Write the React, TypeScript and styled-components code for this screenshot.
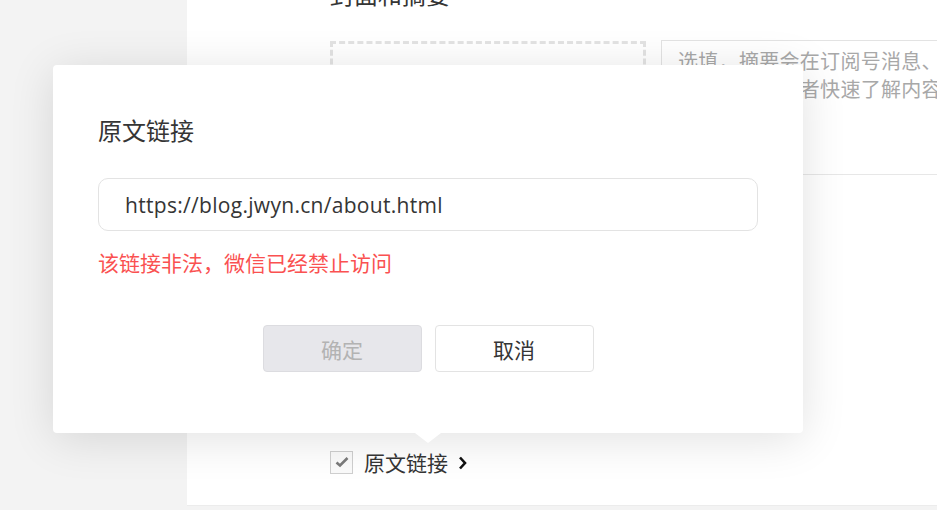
import React from "react";
import styled, { createGlobalStyle } from "styled-components";

const GlobalStyle = createGlobalStyle`
  html, body { margin: 0; padding: 0; }
  body {
    width: 937px;
    height: 510px;
    overflow: hidden;
    background: #f3f3f3;
    font-family: "Noto Sans CJK SC", "Noto Sans", sans-serif;
    color: #353535;
  }
  * { box-sizing: border-box; }
`;

const Page = styled.div`
  position: relative;
  display: flex;
  width: 937px;
  height: 510px;
  overflow: hidden;
`;

const Sidebar = styled.div`
  width: 187px;
  flex-shrink: 0;
  background: #f3f3f3;
`;

const Main = styled.div`
  flex: 1;
  background: #ffffff;
  display: flex;
  flex-direction: column;
  height: 506px;
  border-bottom: 1px solid #ececec;
`;

const CoverSection = styled.section`
  padding-left: 143px;
  border-bottom: 1px solid #e7e7e7;
  height: 175px;
`;

const SectionTitle = styled.h2`
  margin: -18px 0 0 0;
  font-size: 24px;
  line-height: 24px;
  font-weight: 400;
  color: #353535;
`;

const CoverRow = styled.div`
  display: flex;
  align-items: flex-start;
  margin-top: 34px;
`;

const CoverDrop = styled.div`
  width: 316px;
  height: 128px;
  margin-top: 1px;
  border: 3px dashed #e3e3e3;
`;

const Digest = styled.div`
  flex: 1;
  margin-left: 15px;
  height: 128px;
  border: 1px solid #e3e3e3;
  border-right: none;
  border-bottom: none;
  padding: 6px 0 0 16px;
  font-size: 20px;
  line-height: 28px;
  letter-spacing: 0.3px;
  color: #a8a8a8;
  white-space: nowrap;
  overflow: hidden;
`;

const Spacer = styled.div`
  flex: 1;
`;

const LinkRow = styled.label`
  display: flex;
  align-items: center;
  padding-left: 143px;
  margin-bottom: 28px;
  font-size: 21px;
  color: #353535;
`;

const CheckBox = styled.span`
  width: 23px;
  height: 23px;
  border: 1px solid #cfcfcf;
  background: #fafafa;
  display: flex;
  align-items: center;
  justify-content: center;
  margin-right: 11px;
`;

const Chevron = styled.svg`
  margin-left: 10px;
  margin-top: 2px;
`;

const Dialog = styled.div`
  position: absolute;
  left: 53px;
  top: 65px;
  width: 750px;
  height: 368px;
  background: #fff;
  border-radius: 4px;
  box-shadow: 0 6px 46px rgba(0, 0, 0, 0.12);
  padding: 48px 45px 0 45px;
  display: flex;
  flex-direction: column;

  &::after {
    content: "";
    position: absolute;
    left: 362px;
    bottom: -10px;
    width: 0;
    height: 0;
    border-left: 13px solid transparent;
    border-right: 13px solid transparent;
    border-top: 10px solid #fff;
  }
`;

const DialogTitle = styled.h3`
  margin: 0;
  font-size: 24px;
  line-height: 34px;
  font-weight: 400;
  color: #353535;
`;

const UrlInput = styled.div`
  margin-top: 31px;
  height: 53px;
  border: 1px solid #e3e3e3;
  border-radius: 10px;
  padding-left: 26px;
  display: flex;
  align-items: center;
  font-family: "Open Sans", "Noto Sans CJK SC", sans-serif;
  font-size: 21px;
  letter-spacing: 0.3px;
  color: #353535;
`;

const ErrorText = styled.p`
  margin: 16px 0 0 0;
  font-size: 21px;
  line-height: 30px;
  color: #fa5151;
`;

const Actions = styled.div`
  margin-top: 48px;
  display: flex;
  justify-content: center;
  gap: 13px;
`;

const Button = styled.button<{ $disabled?: boolean }>`
  width: 159px;
  height: 47px;
  border-radius: 4px;
  font-family: "Noto Sans CJK SC", sans-serif;
  font-size: 21px;
  border: 1px solid ${(p) => (p.$disabled ? "#dcdce0" : "#e3e3e3")};
  background: ${(p) => (p.$disabled ? "#e7e7eb" : "#ffffff")};
  color: ${(p) => (p.$disabled ? "#b3b3b3" : "#353535")};
  cursor: ${(p) => (p.$disabled ? "default" : "pointer")};
`;

export default function App() {
  return (
    <>
      <GlobalStyle />
      <Page>
        <Sidebar />
        <Main>
          <CoverSection>
            <SectionTitle>封面和摘要</SectionTitle>
            <CoverRow>
              <CoverDrop />
              <Digest>
                选填，摘要会在订阅号消息、转发链接等文章外的场景显露，
                <br />
                显露，帮助读者快速了解内容，如不填写则默认抓取正文前54字
              </Digest>
            </CoverRow>
          </CoverSection>
          <Spacer />
          <LinkRow>
            <CheckBox>
              <svg width="14" height="12" viewBox="0 0 14 12">
                <path
                  d="M1.5 6.5 L5 9.5 L12.5 2"
                  fill="none"
                  stroke="#7a7a7a"
                  strokeWidth="2.6"
                />
              </svg>
            </CheckBox>
            原文链接
            <Chevron width="9" height="14" viewBox="0 0 9 14">
              <path
                d="M2 1.5 L7 7 L2 12.5"
                fill="none"
                stroke="#111"
                strokeWidth="2.6"
              />
            </Chevron>
          </LinkRow>
        </Main>
        <Dialog>
          <DialogTitle>原文链接</DialogTitle>
          <UrlInput>https://blog.jwyn.cn/about.html</UrlInput>
          <ErrorText>该链接非法，微信已经禁止访问</ErrorText>
          <Actions>
            <Button $disabled>确定</Button>
            <Button>取消</Button>
          </Actions>
        </Dialog>
      </Page>
    </>
  );
}
